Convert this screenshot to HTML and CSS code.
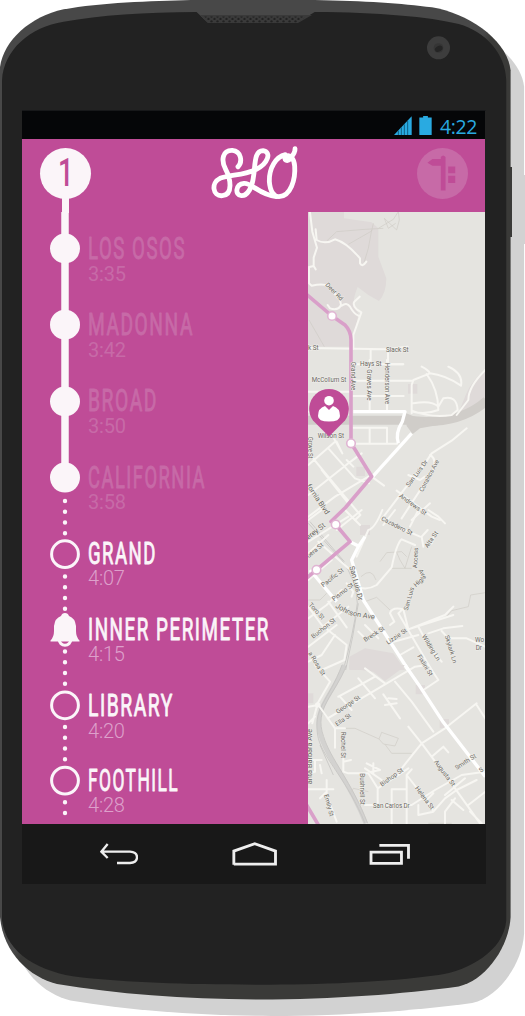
FILE: index.html
```html
<!DOCTYPE html>
<html lang="en">
<head>
<meta charset="utf-8">
<title>SLO Transit</title>
<link rel="stylesheet" href="styles.css">
</head>
<body>
<div class="phone">
  <svg class="shell" viewBox="0 0 525 1016" aria-hidden="true">
    <defs>
      <path id="body" d="M0 200C12 120 90 50 190 28C300 8 450 3 570 0H940C1090 3 1200 10 1290 22C1400 40 1515 120 1525 210V2739C1520 2829 1450 2929 1370 2946C1200 2969 1000 2984 770 2985C550 2984 350 2969 170 2939C90 2919 10 2849 0 2739Z"/>
      <pattern id="grille" width="6" height="5" patternUnits="userSpaceOnUse">
        <circle cx="1.5" cy="1.5" r="1.2" fill="#222"/><circle cx="4.5" cy="4" r="1.2" fill="#222"/>
      </pattern>
      <linearGradient id="edge" x1="0" y1="0" x2="1" y2="1">
        <stop offset=".49" stop-color="#484848"/><stop offset=".5" stop-color="#3a3a38"/>
      </linearGradient>
    </defs>
    <use href="#body" transform="translate(13.5 16.5) scale(.33482)" fill="#d2d2d2"/>
    <path fill="#d2d2d2" d="M510 175h15v69h-15z"/>
    <path fill="#3a3a38" d="M508 167h4v70h-4z"/>
    <use href="#body" transform="scale(.33482)" fill="url(#edge)"/>
    <path transform="scale(.33482)" fill="#222" d="M6 240C10 150 90 80 190 65C300 45 430 38 587 36L620 67H888L940 36C1130 37 1280 50 1370 72C1450 95 1510 160 1512 240V2749C1505 2839 1400 2899 1310 2912C1150 2934 950 2941 770 2941C550 2941 380 2934 240 2919C120 2904 20 2849 6 2749Z"/>
    <path fill="#3a3a3a" d="M200 15h112l-14 8h-90z"/>
    <path fill="url(#grille)" d="M204 16.5h102l-8 6h-89z"/>
    <circle cx="438.5" cy="47.8" r="11.5" fill="#3d3d3d"/>
    <circle cx="438.5" cy="48" r="4.8" fill="#353535"/>
    <ellipse cx="438.8" cy="48.7" rx="4" ry="2.8" transform="rotate(-25 438.8 48.7)" fill="#252525"/>
  </svg>

  <main class="screen">
    <div class="status">
      <svg class="signal" viewBox="0 0 54 57"><path d="M0 57L53 1V57Z"/><path class="cuts" d="M13 57V44M22 57V34M31 57V25M41 57V14"/></svg>
      <svg class="battery" viewBox="0 0 39 60"><path d="M0 5H12V0H27V5H39V60H0Z"/></svg>
      <span class="clock">4:22</span>
    </div>

    <section class="app">
      <header class="bar">
        <div class="route-badge"><span class="stem"></span><b>1</b></div>
        <svg class="logo" viewBox="0 0 282 186" role="img" aria-label="SLO">
          <path d="M90 74C104 60 100 27 73 25C44 24 38 54 53 82C68 110 76 158 43 161C14 164 8 122 36 109C66 98 108 100 145 82C180 64 192 30 165 26C138 26 142 70 137 100C133 138 118 162 100 161C80 159 82 127 108 124C132 122 152 158 205 164"/>
          <path d="M232 38C204 44 183 78 184 118C186 148 198 164 213 164C248 163 263 112 260 72C258 48 246 36 234 43C224 52 238 62 248 48C256 38 262 30 261 20"/>
        </svg>
        <svg class="sign" viewBox="0 0 152 152">
          <circle cx="76" cy="76" r="76"/>
          <path d="M31 44L46 33H71V27Q78 17 85 27V127H71V53H46ZM93 55H114V75H93ZM93 83H114V104H93Z"/>
        </svg>
      </header>

      <div class="content">
        <svg class="rail" viewBox="0 0 30 611">
          <path class="solid" d="M15 0V266"/>
          <circle class="dot" cx="15" cy="36.5" r="15"/><circle class="dot" cx="15" cy="112.7" r="15"/>
          <circle class="dot" cx="15" cy="189.5" r="15"/><circle class="dot" cx="15" cy="265.6" r="15"/>
          <path class="dots" d="M15 289V324M15 364.5V398M15 439.5V474M15 515V550M15 590.3V602"/>
          <circle class="ring" cx="15" cy="342.2" r="13.4"/>
          <circle class="ring" cx="15" cy="493.3" r="13.4"/>
          <circle class="ring" cx="15" cy="568.6" r="13.4"/>
          <g class="bell">
            <circle class="clapper" cx="15" cy="427.5" r="5.8"/>
            <path d="M11 404Q12 401 15 401T19 404Q25 406 26 414V419Q26 425 29.5 428.5V429.5H.5V428.5Q4 425 4 419V414Q5 406 11 404Z"/>
          </g>
        </svg>

        <ol class="stops">
          <li class="past"><svg class="name"><text y="24" textLength="98" lengthAdjust="spacingAndGlyphs">LOS OSOS</text></svg><time>3:35</time></li>
          <li class="past"><svg class="name"><text y="24" textLength="106" lengthAdjust="spacingAndGlyphs">MADONNA</text></svg><time>3:42</time></li>
          <li class="past"><svg class="name"><text y="24" textLength="70" lengthAdjust="spacingAndGlyphs">BROAD</text></svg><time>3:50</time></li>
          <li class="past"><svg class="name"><text y="24" textLength="118" lengthAdjust="spacingAndGlyphs">CALIFORNIA</text></svg><time>3:58</time></li>
          <li><svg class="name"><text y="24" textLength="69" lengthAdjust="spacingAndGlyphs">GRAND</text></svg><time>4:07</time></li>
          <li><svg class="name"><text y="24" textLength="182" lengthAdjust="spacingAndGlyphs">INNER PERIMETER</text></svg><time>4:15</time></li>
          <li><svg class="name"><text y="24" textLength="86" lengthAdjust="spacingAndGlyphs">LIBRARY</text></svg><time>4:20</time></li>
          <li><svg class="name"><text y="24" textLength="91" lengthAdjust="spacingAndGlyphs">FOOTHILL</text></svg><time>4:28</time></li>
        </ol>

        <svg class="map" viewBox="308 212 177 612">
          <path fill="#e5e4e0" d="M308 212h177v612h-177z"/>
          <!-- hills and campus -->
          <g transform="translate(305 205) scale(.33333)">
            <path class="park" d="M9 20H117V40L200 52L220 70V155L244 220Q244 265 222 288L190 270L158 246Q140 290 150 300L160 330L140 425H9Z"/>
            <path class="trail" d="M65 108L95 80L180 73L235 70M130 118L200 78L205 55M200 75L190 130L178 170M220 70L265 43L280 20L283 45L275 75L238 40L250 70L272 55M12 345L58 425"/>
            <path class="road" d="M15 22L22 80L36 128L26 158V183L10 187M26 183L32 193M32 73L35 105Q60 120 90 103Q125 113 165 160V175Q172 188 184 170M12 190V235L20 242Q55 235 70 243L105 285L108 300Q100 318 75 310L68 300M110 302Q125 290 135 305Q145 325 160 332M164 275L148 290Q142 300 155 313L169 322L145 390V432M10 429L245 433L308 425M197 433V480M249 433V478L295 478"/>
          </g>
          <!-- highway and downtown -->
          <g transform="translate(305 360) scale(.33333)">
            <path class="park" d="M541 30Q500 60 482 105L457 168L541 130ZM309 72H337V101H309ZM154 320H180V348H154Z"/>
            <path class="highway" d="M9 181H310C400 192 480 180 545 122"/>
            <path class="highway-end" d="M300 158L340 175L400 195L345 205L323 222L305 198Z"/>
            <path class="road" d="M143 13H294M143 62H320M143 108H296M194 0V155M246 0V155M10 95H135M10 155H140M145 203H246V250M194 203V250M146 251H276M350 20Q370 30 375 40L325 60L320 75V160M365 42Q400 90 400 150Q360 165 325 155M325 130Q380 120 400 140L415 115Q455 105 458 150L440 165Q380 175 320 152M375 40Q420 45 468 77Q475 40 430 20M541 30Q490 80 490 120L455 165M485 205L440 242L380 280L350 325L300 385L228 480M375 285Q395 295 385 330L290 475M310 345L345 360L360 350M200 350L237 377M275 392L380 470L405 480M320 480L375 430M10 315L90 245M10 405L130 310L170 280M10 470L90 410L190 350M20 290L90 375L166 465L150 480M78 220L112 280L95 245M70 265L150 355L192 370M125 300L145 320M50 330L130 430"/>
            <path class="avenue" d="M145 155H300L292 185Q270 220 280 250M320 220L203 350"/>
          </g>
          <g transform="translate(305 510) scale(.33333)">
            <path class="park" d="M165 45H195V75H165ZM133 440L180 415L265 430L300 480H133Z"/>
            <path class="rail-line" d="M10 40L110 150Q155 210 157 280Q145 370 115 480M15 35L118 155M160 280Q145 380 122 480"/>
            <path class="trail" d="M225 155L245 128L290 125L305 140M272 120L285 150L300 175L320 110M168 200Q200 170 213 210M180 275L215 262L255 300M256 175L320 175M541 248L497 255L490 290L440 302L425 320M10 270H45L65 250"/>
            <path class="road" d="M10 30L50 0M10 95L130 20M95 60L170 0M120 0L165 45M232 0Q210 55 190 60L155 140M270 0L235 45M340 0L315 50M370 0L400 20L420 40M265 45L345 80M355 110L350 80L368 60M392 65L380 100M330 105L290 88Q275 100 260 172L215 225Q190 240 165 233M40 95L130 175M10 130L70 75M10 210L80 150M10 325L65 285L110 240M25 380L60 345L130 290M10 410L95 345M10 455L50 435L90 375M50 480L118 450L125 405L50 345L10 290M125 220L145 245L140 260M70 275L125 352M180 345L220 385M160 365L180 385M255 345L268 335L255 310Q260 290 295 298L310 358L445 315M290 300L280 310L380 480M310 358L420 315L445 290M340 350L375 415L410 455M370 370L415 355L472 348M410 363L430 385L485 385L540 410M250 400L340 375M285 435L325 412"/>
            <path class="avenue" d="M180 80L160 110L140 150L175 270L310 480M135 95L160 108M15 180L95 275"/>
          </g>
          <!-- south side -->
          <g transform="translate(305 665) scale(.33333)">
            <path class="park" d="M133 0H305L240 48L205 20L133 10ZM332 60H360V88H332ZM404 162H432V190H404ZM9 85H25V115H9Z"/>
            <path class="rail-wide" d="M118 0C80 100 20 130 48 215C65 280 130 340 182 475"/>
            <path class="rail-line" d="M111 0C70 110 20 130 40 220C55 280 130 350 180 475M125 0C90 90 25 130 56 215C75 280 140 350 188 475M45 240L85 330M38 125L68 160"/>
            <path class="trail" d="M115 190L150 190L222 222L230 202L280 220L270 243L235 237L222 222M240 238L260 265L320 265M190 380L145 370L140 380M370 475H440"/>
            <path class="road" d="M30 0L75 50L38 115L22 175M10 125L40 120L90 190H120M90 190V248M68 160L330 5L365 0M100 95L165 60L210 35M105 95L140 135M160 40L210 100M180 10L240 55M370 0L400 45L355 75M270 50L320 110L385 200M310 185L350 235L450 370L525 475M290 310L350 235L420 190L515 115M515 120L541 160M235 88L285 160M240 120L275 115M250 100L275 102M115 280V320L130 325H190L218 370V415M115 290L138 285M185 295L225 315L200 320M180 310L230 345M205 295V325M218 370L310 310M260 475V373H305M305 475V330L320 313M305 330L375 420L385 440L340 450V420M180 420H320L390 375L470 330L541 320M380 275L415 245L430 262M420 390L480 340M385 440L420 400L455 375L515 345M360 410L385 385M440 405L475 435M420 475V440L450 400M490 420L541 380M495 440L530 475M10 285H50M30 285V320L10 325M45 300L50 325M10 373H85M65 345V390L95 470M65 380L45 400M10 175L30 155"/>
            <path class="avenue" d="M300 0L345 65L415 172L541 335"/>
            <circle class="road" cx="38" cy="120" r="5"/>
          </g>
          <!-- bus route -->
          <path class="route" d="M306 294L332 316L345 325Q351 331 351 340V443L371.7 476.5L345.5 507.5L331 521.5L335.7 524.5L350 541.7L316.5 569.8L306 578.5M306 804L319 826"/>
          <g class="halt"><circle cx="332" cy="316" r="4.3"/><circle cx="351" cy="443.3" r="4.3"/><circle cx="335.7" cy="524.5" r="4.3"/><circle cx="316.5" cy="569.8" r="4.3"/></g>
          <!-- street names -->
          <g class="labels" transform="translate(305 205) scale(.33333)">
            <text transform="translate(60 241) rotate(45)">Deer Rd</text>
            <text x="9" y="435">k St</text><text x="243" y="440">Slack St</text>
          </g>
          <g class="labels" transform="translate(305 360) scale(.33333)">
            <text x="165" y="19">Hays St</text><text x="20" y="66" textLength="104">McCollum St</text>
            <text transform="translate(138 5) rotate(90)">Grand Ave</text>
            <text transform="translate(185 28) rotate(90)">Graves Ave</text>
            <text transform="translate(240 8) rotate(90)" textLength="124">Henderson Ave</text>
            <text x="38" y="234">Wilson St</text>
            <text transform="translate(10 230) rotate(90)" textLength="66">Grove St</text>
            <text transform="translate(312 382) rotate(-53)">San Luis Dr</text>
            <text transform="translate(353 397) rotate(-62)" textLength="106">Corralitos Ave</text>
            <text transform="translate(281 410) rotate(36)">Andrews St</text>
            <text class="big" transform="translate(4 378) rotate(56)">fornia Blvd</text>
          </g>
          <g class="labels" transform="translate(305 510) scale(.33333)">
            <text transform="translate(227 30) rotate(27)">Cazadero St</text>
            <text class="big" transform="translate(10 90) rotate(-38)">erey St</text>
            <text transform="translate(11 145) rotate(-40)">uera St</text>
            <text transform="translate(55 232) rotate(-38)">Pacific St</text>
            <text transform="translate(87 274) rotate(-38)">Pismo St</text>
            <text transform="translate(368 115) rotate(-55)">Alta St</text>
            <text transform="translate(336 175) rotate(-87)">Access</text>
            <text transform="translate(308 302) rotate(-74)">San Luis</text>
            <text transform="translate(333 232) rotate(-42)">High</text>
            <text transform="translate(340 182) rotate(60)">Ave</text>
            <text class="big" transform="translate(133 170) rotate(75)" textLength="106">San Luis Dr</text>
            <text class="big" transform="translate(90 292) rotate(28)">John</text>
            <text class="big" transform="translate(132 315) rotate(10)">son Ave</text>
            <text transform="translate(10 285) rotate(48)">Toro St</text>
            <text transform="translate(25 386) rotate(-38)">Buchon St</text>
            <text transform="translate(181 396) rotate(-32)">Breck St</text>
            <text transform="translate(249 404) rotate(-34)">Lizzie St</text>
            <text transform="translate(350 379) rotate(58)">Wilding Ln</text>
            <text transform="translate(419 378) rotate(73)">Skylark Ln</text>
            <text transform="translate(336 439) rotate(58)">Fixlini St</text>
            <text transform="translate(9 430) rotate(58)">a Rosa St</text>
            <text x="510" y="396">Wo</text><text x="512" y="420">Dr</text>
          </g>
          <g class="labels" transform="translate(305 665) scale(.33333)">
            <text transform="translate(98 147) rotate(-34)">George St</text>
            <text transform="translate(96 184) rotate(-34)">Ella St</text>
            <text transform="translate(109 200) rotate(90)">Rachel St</text>
            <text transform="translate(166 325) rotate(90)">Bushnell St</text>
            <text transform="translate(57 390) rotate(75)">Emily St</text>
            <text class="big" transform="translate(22 358) rotate(-90)">anta Barbara Ave</text>
            <text transform="translate(231 365) rotate(-36)">Bishop St</text>
            <text x="204" y="428" textLength="110">San Carlos Dr</text>
            <text transform="translate(386 291) rotate(53)">Augusta St</text>
            <text transform="translate(329 370) rotate(53)">Helena St</text>
            <text transform="translate(455 315) rotate(-33)">Smith St</text>
            <text transform="translate(527 323) rotate(-33)">S</text>
          </g>
          <!-- current position -->
          <path fill="#bf4c97" d="M329 436.5L313 420.5A19.8 19.8 0 1 1 345 420.5Z"/>
          <circle cx="329" cy="400.7" r="4.8" fill="#fff"/>
          <path fill="#fff" d="M325 406L329 410L333 406Q340 408 340 416Q340 421.5 329 421.5T318 416Q318 408 325 406Z"/>
        </svg>
      </div>
    </section>

    <nav class="keys">
      <svg class="back" viewBox="298 70 114 66"><path d="M321 73L302 96L321 115M303 96H388Q409 97 409 113T388 130H349"/></svg>
      <svg class="home" viewBox="692 62 136 76"><path d="M697.5 133V92L760 70L822 92V131H697.5Z"/></svg>
      <svg class="recent" viewBox="1103 70 124 68"><path d="M1109 97H1200V131H1109ZM1134 77H1221V117"/></svg>
    </nav>
  </main>
</div>
</body>
</html>
```
FILE: styles.css
```css
body { margin: 0; background: #fff; font-family: Roboto, "Liberation Sans", sans-serif; }
.phone { position: relative; box-sizing: border-box; width: 525px; height: 1016px; padding: 110px 0 0 22px; overflow: hidden; }
.shell { position: absolute; inset: 0; width: 525px; height: 1016px; }
.screen { position: relative; width: 464px; }
svg { display: block; flex: none; }

.status { display: flex; align-items: center; justify-content: flex-end; box-sizing: border-box; height: 29px; padding-right: 8px; background: #050608; border-top: 1px solid #17181a; border-right: 1px solid #222; }
.status svg { fill: #29aae1; }
.signal { width: 18px; height: 19px; margin-right: 7px; }
.signal .cuts { stroke: #116084; stroke-width: 3; }
.battery { width: 13px; height: 19px; margin-right: 8px; }
.clock { color: #29aae1; font: 19.5px/28px "Open Sans", sans-serif; letter-spacing: -.4px; padding-top: 3px; }

.app { width: 463px; height: 685px; background: #bf4c97; }
.bar { display: flex; height: 73px; box-sizing: border-box; padding: 9px 17px 0 18px; }
.route-badge { position: relative; display: flex; align-items: center; justify-content: center; width: 51px; height: 51px; border-radius: 50%; background: #fbf5f9; }
.route-badge b { color: #bf4c97; font-size: 38px; font-weight: 500; line-height: 51px; transform: scaleX(.72); }
.stem { position: absolute; top: 48px; left: 21.5px; width: 7.5px; height: 17px; background: #fbf5f9; }
.logo { width: 94px; height: 62px; margin: -6px 0 0 117px; fill: none; stroke: #fff; stroke-width: 14.5; stroke-linecap: round; stroke-linejoin: round; }
.sign { width: 51px; height: 51px; margin-left: auto; }
.sign circle { fill: #c76aa7; }
.sign path { fill: #bf4c97; }

.content { display: flex; height: 612px; padding-left: 28px; }
.rail { width: 30px; height: 611px; margin-right: 8px; overflow: visible; fill: none; }
.solid { stroke: #fbf5f9; stroke-width: 7.5; }
.dot { fill: #fbf5f9; }
.ring { stroke: #fbf5f9; stroke-width: 3; }
.dots { stroke: #fbf5f9; stroke-width: 4.4; stroke-linecap: round; stroke-dasharray: 0 10.75; }
.bell { fill: #fbf5f9; }
.clapper { fill: #bf4c97; stroke: #fbf5f9; stroke-width: 3; }

.stops { width: 220px; margin: 0; padding: 23px 0 0; list-style: none; color: #fbf5f9; }
.stops li { height: 76.2px; }
.stops li:nth-child(7) { height: 74.4px; }
.name { width: 210px; height: 25px; overflow: visible; fill: currentColor; stroke: currentColor; stroke-width: .9; stroke-linejoin: round; font-size: 30.8px; font-weight: 400; letter-spacing: 2.5px; }
.stops time { display: block; color: #dda0cb; font-size: 20px; font-weight: 300; line-height: 23px; margin-top: 2.5px; letter-spacing: -.2px; }
.stops .past, .stops .past time { color: #c76aa7; }
.stops .past time { font-weight: 400; }

.map { width: 177px; height: 612px; }
.park { fill: #dfdad9; }
.trail { fill: none; stroke: #cfccc6; stroke-width: 2; }
.road { fill: none; stroke: #f7f6f2; stroke-width: 6; stroke-linecap: round; stroke-linejoin: round; }
.avenue { fill: none; stroke: #fff; stroke-width: 10; stroke-linejoin: round; }
.highway { fill: none; stroke: #d0cdc9; stroke-width: 27; }
.highway-end { fill: #d0cdc9; }
.rail-line { fill: none; stroke: #c6c5c3; stroke-width: 2.5; }
.rail-wide { fill: none; stroke: #d3d2d0; stroke-width: 13; }
.route { fill: none; stroke: #d99fc9; stroke-width: 3.6; stroke-linejoin: round; }
.halt { fill: #fff; stroke: #e0b5d3; stroke-width: 1.6; }
.labels { font: 19px Roboto, sans-serif; fill: #6a6862; stroke: #f0efeb; stroke-width: 3; paint-order: stroke; }
.labels .big { font-size: 22px; }

.keys { display: flex; height: 60px; box-sizing: border-box; padding: 17px 0 0 78px; background: #181818; }
.keys svg { fill: none; stroke: #eee; stroke-width: 7; }
.back { width: 38px; height: 22px; margin: 2px 93.5px 0 0; }
.home { width: 45.5px; height: 25.5px; margin: -.5px 92px 0 0; }
.keys .home, .keys .recent { stroke-width: 8.5; }
.recent { width: 41.5px; height: 22.8px; margin-top: 2px; }
```
